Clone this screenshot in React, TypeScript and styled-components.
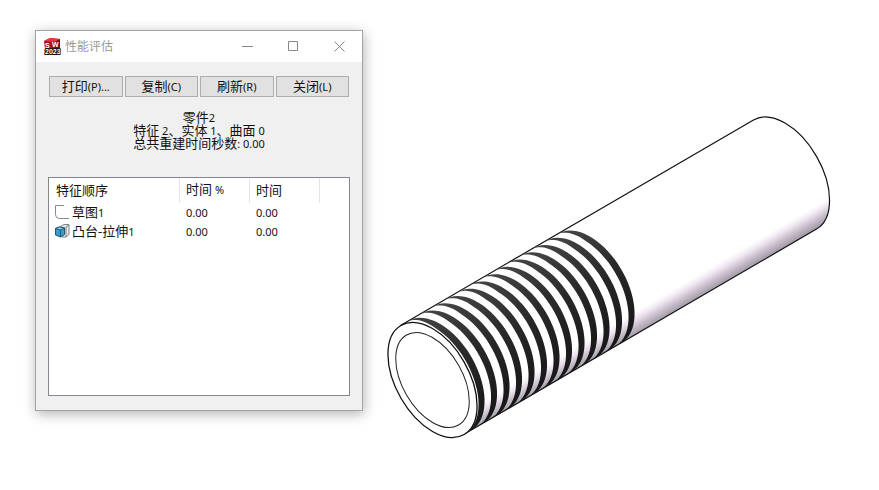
import React from "react";
import styled, { createGlobalStyle } from "styled-components";

const GlobalStyle = createGlobalStyle`
  * { box-sizing: border-box; }
  body { margin: 0; background: #fff; }
`;

const Viewport = styled.main`
  display: flex;
  align-items: flex-start;
  min-height: 100vh;
  padding-left: 35px;
  overflow: hidden;
  font-family: "Noto Sans", "Noto Sans CJK SC", sans-serif;
  font-size: 13px;
  color: #111;
`;

const Dialog = styled.section`
  flex: 0 0 328px;
  margin-top: 30px;
  background: #f0f0f0;
  border: 1px solid #a3a3a3;
  box-shadow: 1px 3px 12px rgba(0, 0, 0, 0.3);
`;

const TitleBar = styled.header`
  display: flex;
  align-items: center;
  height: 31px;
  padding-left: 8px;
  background: #fff;
`;

const Title = styled.h1`
  flex: 1;
  margin: 0;
  padding-left: 4px;
  font-size: 12px;
  line-height: 18px;
  font-weight: 400;
  color: #999;
`;

const CaptionButton = styled.button`
  display: grid;
  place-items: center;
  width: 46px;
  height: 31px;
  padding: 0;
  border: 0;
  background: transparent;
`;

const Body = styled.div`
  padding: 14px 12px;
`;

const Toolbar = styled.div`
  display: grid;
  grid-template-columns: repeat(4, 1fr);
  gap: 2px;
  padding: 0 1px;
`;

const CommandButton = styled.button`
  height: 21px;
  padding: 0;
  border: 1px solid #adadad;
  background: #e1e1e1;
  font: inherit;
  line-height: 18px;
  color: #111;
`;

const Small = styled.span`
  font-size: 11px;
`;

const Summary = styled.div`
  margin: 14px 0 27px;
  text-align: center;
  line-height: 13px;
`;

const Line = styled.p`
  margin: 0;
`;

const ListBox = styled.div`
  height: 219px;
  border: 1px solid #828790;
  background: #fff;
`;

const FeatureTable = styled.table`
  width: 271px;
  border-spacing: 0;
  table-layout: fixed;
  text-align: left;
`;

const HeadCell = styled.th<{ $width: number }>`
  width: ${(p) => p.$width}px;
  height: 25px;
  padding: 0 0 2px 6px;
  border-right: 1px solid #e5e5e5;
  font-weight: 400;
  line-height: 18px;

  &:first-child {
    padding-left: 7px;
  }
`;

const Cell = styled.td`
  height: 19px;
  padding: 0 0 0 6px;
  line-height: 18px;
  font-size: 11px;
`;

const FeatureName = styled.div`
  display: flex;
  align-items: center;
  gap: 2px;
  font-size: 13px;
`;

const Model = styled.svg`
  flex: 0 0 460px;
  height: 340px;
  margin: 106px 0 0 17px;
`;

const AppIcon = () => (
  <svg width="17" height="17" viewBox="0 0 17 17" aria-hidden="true">
    <path d="M0 3 6 0l10 1v9l-5 4L1 11Z" fill="#a80f1c" />
    <path d="M0 3 6 0l10 1-5 3Z" fill="#dc3a3f" />
    <path d="m11 4 5-3v9l-5 4Z" fill="#7c0d18" />
    <g fontFamily="Liberation Sans" fontWeight="700" fill="#fff">
      <text x="1" y="10" fontSize="7">S</text>
      <text x="8" y="9" fontSize="7">W</text>
      <text x="1" y="16" fontSize="7" stroke="#111" strokeWidth="2" paintOrder="stroke">2023</text>
    </g>
  </svg>
);

const SketchIcon = () => (
  <svg width="15" height="15" viewBox="0 0 15 15" fill="none" aria-hidden="true">
    <path d="M9 .5H.5v9q0 4 4 4H14" stroke="#8a8a8a" />
  </svg>
);

const ExtrudeIcon = () => (
  <svg width="15" height="15" viewBox="0 0 15 15" strokeLinejoin="round" aria-hidden="true">
    <path d="M6 2 9 .5h5v10L11 13H7Z" fill="#e6e8ea" stroke="#7c8489" />
    <path d="M11 3v10M11 3l3-2" stroke="#7c8489" fill="none" />
    <path d="m.5 4.500 4-1.500 5 1v6.500l-4 2.500-5-2Z" fill="#3d9ccb" stroke="#1d5877" />
    <path d="m.5 4.500 5 1.500 4-2-5-1Z" fill="#9bd6ee" stroke="#1d5877" />
    <path d="M5.500 6v7" stroke="#1d5877" />
  </svg>
);

const FRONT = { x: 432, y: 380 };
const BACK = { x: 785, y: 174.5 };
const RADIUS = { major: 63, minor: 36.4 };
const TANGENT = { x: 31.5, y: 54.6 };
const THREAD_WIDTH = 6;

const bodyPath = [
  `M${FRONT.x - TANGENT.x} ${FRONT.y - TANGENT.y}`,
  `L${BACK.x - TANGENT.x} ${BACK.y - TANGENT.y}`,
  `A${RADIUS.major} ${RADIUS.minor} 60 0 1 ${BACK.x + TANGENT.x} ${BACK.y + TANGENT.y}`,
  `L${FRONT.x + TANGENT.x} ${FRONT.y + TANGENT.y}`,
].join("");

const slope = (BACK.y - FRONT.y) / (BACK.x - FRONT.x);

// Each groove is the visible half of a ring that narrows towards the silhouette.
const threadPath = (index: number) => {
  const cx = 440 + index * 12.5;
  const cy = FRONT.y + (cx - FRONT.x) * slope;
  const outer: string[] = [];
  const inner: string[] = [];
  for (let degrees = -82; degrees <= 88; degrees += 5) {
    const t = (degrees * Math.PI) / 180;
    const along = RADIUS.minor * Math.cos(t);
    const x = cx + along * 0.866 + TANGENT.x * Math.sin(t);
    const y = cy - along * 0.5 + TANGENT.y * Math.sin(t);
    const width = THREAD_WIDTH * Math.min(1, 0.5 + (degrees + 82) / 80);
    outer.push(`${x.toFixed(2)} ${y.toFixed(2)}`);
    inner.unshift(`${(x - width).toFixed(2)} ${(y - width * slope).toFixed(2)}`);
  }
  return `M${outer.join("L")}L${inner.join("L")}Z`;
};

const ThreadedPipe = () => (
  <Model viewBox="380 106 460 340" role="img" aria-label="零件2">
    <defs>
      <linearGradient id="shade" gradientUnits="userSpaceOnUse" x1="621" y1="343" x2="611" y2="326">
        <stop offset="0" stopColor="#a39ba8" />
        <stop offset=".35" stopColor="#c8becb" />
        <stop offset=".7" stopColor="#efe6f1" />
        <stop offset="1" stopColor="#fff" />
      </linearGradient>
      <linearGradient id="thread" gradientUnits="userSpaceOnUse" x1="558" y1="234" x2="621" y2="343">
        <stop offset="0" stopColor="#454545" />
        <stop offset=".5" stopColor="#272727" />
        <stop offset="1" stopColor="#171717" />
      </linearGradient>
    </defs>
    <path d={bodyPath} fill="url(#shade)" stroke="#111" strokeWidth="1.2" />
    {Array.from({ length: 13 }, (_, index) => (
      <path key={index} d={threadPath(index)} fill="url(#thread)" />
    ))}
    <ellipse rx="63" ry="36.4" transform={`translate(${FRONT.x + 0.5} ${FRONT.y}) rotate(60)`} fill="#fff" stroke="#111" strokeWidth="1.3" />
    <ellipse rx="52" ry="30" transform={`translate(${FRONT.x + 0.5} ${FRONT.y}) rotate(60)`} fill="#fff" stroke="#222" />
  </Model>
);

const commands = [
  { label: "打印", hint: "(P)..." },
  { label: "复制", hint: "(C)" },
  { label: "刷新", hint: "(R)" },
  { label: "关闭", hint: "(L)" },
];

const features = [
  { icon: <SketchIcon />, name: "草图", number: "1" },
  { icon: <ExtrudeIcon />, name: "凸台-拉伸", number: "1" },
];

export default function App() {
  return (
    <>
      <GlobalStyle />
      <Viewport>
        <Dialog role="dialog" aria-labelledby="dialog-title">
          <TitleBar>
            <AppIcon />
            <Title id="dialog-title">性能评估</Title>
            <CaptionButton aria-label="最小化">
              <svg width="11" height="11" stroke="#888"><path d="M0 5.500h11" /></svg>
            </CaptionButton>
            <CaptionButton aria-label="最大化">
              <svg width="11" height="11" stroke="#888" fill="none"><path d="M.5.5h9v9h-9Z" /></svg>
            </CaptionButton>
            <CaptionButton aria-label="关闭窗口">
              <svg width="11" height="11" stroke="#888"><path d="m.5.5 10 10m0-10-10 10" /></svg>
            </CaptionButton>
          </TitleBar>
          <Body>
            <Toolbar>
              {commands.map((command) => (
                <CommandButton key={command.label}>
                  {command.label}<Small>{command.hint}</Small>
                </CommandButton>
              ))}
            </Toolbar>
            <Summary>
              <Line>零件<Small>2</Small></Line>
              <Line>特征<Small> 2</Small>、实体<Small> 1</Small>、曲面<Small> 0</Small></Line>
              <Line>总共重建时间秒数<Small>: 0.00</Small></Line>
            </Summary>
            <ListBox>
              <FeatureTable>
                <thead>
                  <tr>
                    <HeadCell $width={131}>特征顺序</HeadCell>
                    <HeadCell $width={70}>时间<Small> %</Small></HeadCell>
                    <HeadCell $width={70}>时间</HeadCell>
                  </tr>
                </thead>
                <tbody>
                  {features.map((feature) => (
                    <tr key={feature.name}>
                      <Cell>
                        <FeatureName>
                          {feature.icon}
                          <span>{feature.name}<Small>{feature.number}</Small></span>
                        </FeatureName>
                      </Cell>
                      <Cell>0.00</Cell>
                      <Cell>0.00</Cell>
                    </tr>
                  ))}
                </tbody>
              </FeatureTable>
            </ListBox>
          </Body>
        </Dialog>
        <ThreadedPipe />
      </Viewport>
    </>
  );
}
